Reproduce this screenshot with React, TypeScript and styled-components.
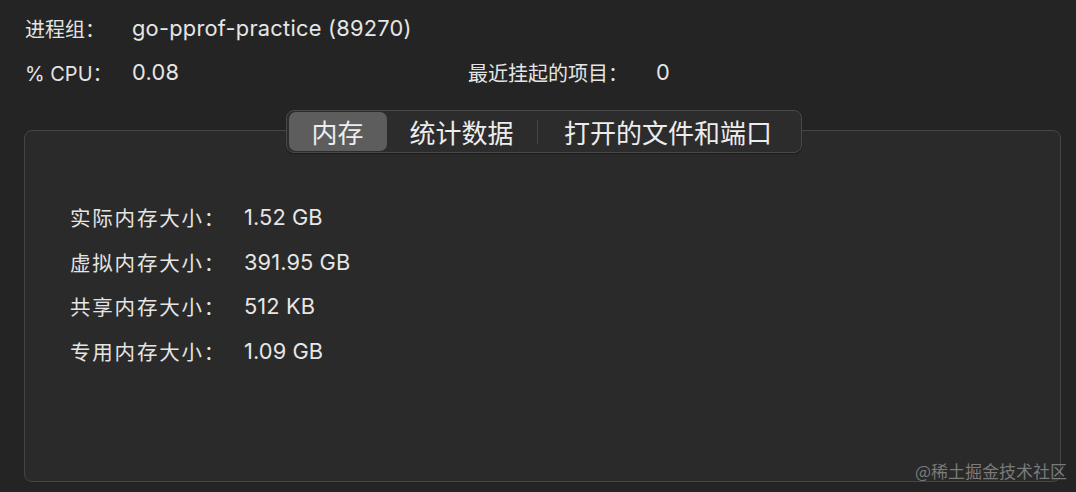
import React from "react";
import styled, { createGlobalStyle } from "styled-components";

const Global = createGlobalStyle`
  html, body { margin: 0; padding: 0; background: #242424; }
  body { font-family: "Inter", "Noto Sans CJK SC", sans-serif; color: #e2e2e2; }
  * { box-sizing: border-box; }
`;

const Page = styled.div`
  position: relative;
  width: 1076px;
  height: 492px;
  padding: 6px 15px 10px 24px;
  background: #242424;
  overflow: hidden;
`;

const InfoGrid = styled.div`
  display: grid;
  grid-template-columns: 107px 336px 188px 1fr;
  grid-auto-rows: 44px;
  align-items: center;
  padding-left: 1px;
`;

const InfoLabel = styled.span`
  font-family: "Inter", "Noto Sans CJK SC", sans-serif;
  font-size: 20px;
  color: #e4e4e4;
  white-space: nowrap;
`;

const InfoValue = styled.span<{ $span?: number }>`
  font-size: 21.8px;
  letter-spacing: 0.25px;
  color: #e6e6e6;
  white-space: nowrap;
  grid-column: span ${(p) => p.$span ?? 1};
`;

const Panel = styled.section`
  margin-top: 36px;
  height: 352px;
  border: 1px solid #464646;
  border-radius: 8px;
  background: #2a2a2a;
  display: flex;
  flex-direction: column;
  align-items: center;
`;

const Segmented = styled.div`
  margin-top: -21px;
  margin-left: 2px;
  height: 43px;
  display: flex;
  align-items: center;
  padding: 0 2px;
  border: 1px solid #4a4a4a;
  border-radius: 8px;
  background: #2c2c2c;
  box-shadow: 0 1px 1px rgba(0, 0, 0, 0.35);
`;

const Segment = styled.div<{ $active?: boolean; $w: number }>`
  width: ${(p) => p.$w}px;
  height: 39px;
  display: flex;
  align-items: center;
  justify-content: center;
  font-family: "Noto Sans CJK SC", sans-serif;
  font-size: 26px;
  color: #ededed;
  border-radius: 7px;
  background: ${(p) => (p.$active ? "#5d5d5d" : "transparent")};
`;

const SegDivider = styled.div`
  width: 1px;
  height: 24px;
  background: #474747;
`;

const MemGrid = styled.div`
  align-self: stretch;
  margin-top: 42px;
  padding-left: 45px;
  display: grid;
  grid-template-columns: 174px 1fr;
  grid-auto-rows: 44.5px;
  align-items: center;
`;

const MemLabel = styled.span`
  font-family: "Noto Sans CJK SC", sans-serif;
  font-size: 20.5px;
  letter-spacing: 1.8px;
  color: #e4e4e4;
`;

const MemValue = styled.span`
  font-size: 21.8px;
  color: #e6e6e6;
  letter-spacing: 0.1px;
`;

const Watermark = styled.div`
  position: absolute;
  right: 9px;
  bottom: 9px;
  font-family: "Noto Sans CJK SC", sans-serif;
  font-size: 17px;
  color: rgba(150, 150, 150, 0.75);
`;

const mem = [
  ["实际内存大小：", "1.52 GB"],
  ["虚拟内存大小：", "391.95 GB"],
  ["共享内存大小：", "512 KB"],
  ["专用内存大小：", "1.09 GB"],
];

export default function App() {
  return (
    <Page>
      <Global />
      <InfoGrid>
        <InfoLabel>进程组：</InfoLabel>
        <InfoValue $span={3}>go-pprof-practice (89270)</InfoValue>
        <InfoLabel>% CPU：</InfoLabel>
        <InfoValue>0.08</InfoValue>
        <InfoLabel>最近挂起的项目：</InfoLabel>
        <InfoValue>0</InfoValue>
      </InfoGrid>
      <Panel>
        <Segmented>
          <Segment $active $w={98}>内存</Segment>
          <Segment $w={150}>统计数据</Segment>
          <SegDivider />
          <Segment $w={261}>打开的文件和端口</Segment>
        </Segmented>
        <MemGrid>
          {mem.map(([l, v]) => (
            <React.Fragment key={l}>
              <MemLabel>{l}</MemLabel>
              <MemValue>{v}</MemValue>
            </React.Fragment>
          ))}
        </MemGrid>
      </Panel>
      <Watermark>@稀土掘金技术社区</Watermark>
    </Page>
  );
}
